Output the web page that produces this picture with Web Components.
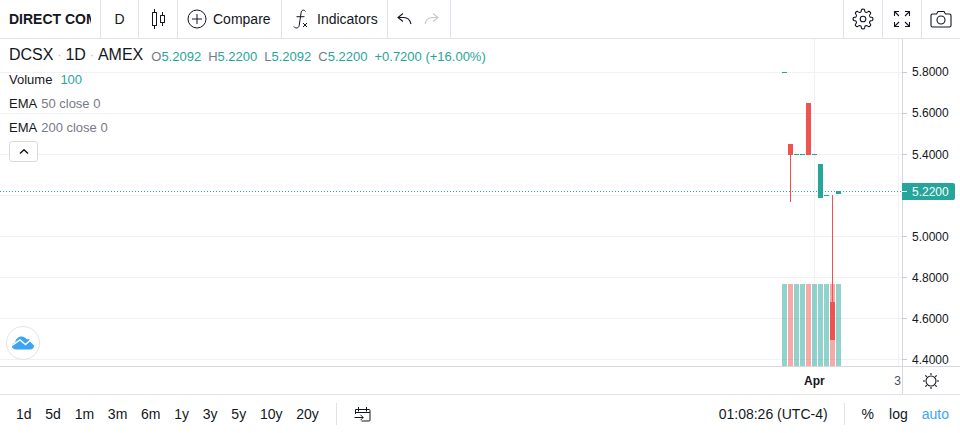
<!DOCTYPE html>
<html>
<head>
<meta charset="utf-8">
<title>DCSX chart</title>
<style>
	html, body { margin: 0; height: 100%; background: #fff; overflow: hidden; }
	body { font-family: "Liberation Sans", Arial, sans-serif; color: #131722; }
</style>
</head>
<body>
<tv-widget>
	<tv-toolbar slot="top">
		<tv-cell style="width:100px;padding-left:9px"><span style="display:block;width:82px;overflow:hidden;white-space:nowrap;font-weight:700">DIRECT COM</span></tv-cell>
		<tv-cell style="width:37px;justify-content:center">D</tv-cell>
		<tv-cell style="width:38px;justify-content:center">
			<svg width="28" height="28" viewBox="0 0 28 28" fill="#131722"><path d="M17 11v6h3v-6h-3zm-.5-1h4a.5.5 0 0 1 .5.5v7a.5.5 0 0 1-.5.5h-4a.5.5 0 0 1-.5-.5v-7a.5.5 0 0 1 .5-.5z"/><path d="M18 7h1v3.500h-1zm0 10.500h1V21h-1z"/><path d="M9 8v12h3V8H9zm-.5-1h4a.5.5 0 0 1 .5.5v13a.5.5 0 0 1-.5.5h-4a.5.5 0 0 1-.5-.5v-13a.5.5 0 0 1 .5-.5z"/><path d="M10 4h1v3.500h-1zm0 16.500h1V24h-1z"/></svg>
		</tv-cell>
		<tv-cell style="width:103px;padding-left:9px;gap:6px">
			<svg width="20" height="20" viewBox="0 0 20 20" fill="none" stroke="#131722"><circle cx="10" cy="10" r="9"/><path d="M10 5v10M5 10h10"/></svg>
			Compare
		</tv-cell>
		<tv-cell style="width:105px;padding-left:10px;gap:9px">
			<svg width="16" height="20" viewBox="0 0 16 20" fill="none" stroke="#131722"><path d="M13.500 2.500C12.500 .8 9.800 .5 9.200 3L7.200 16.500C6.800 19.300 3.400 19.800 1.800 17.500"/><path d="M4.500 7.700H12.500"/><path d="M11 14l4 4M15 14l-4 4"/></svg>
			Indicators
		</tv-cell>
		<tv-cell style="width:62px;padding-left:8px;gap:12px">
			<svg width="16" height="16" viewBox="0 0 16 16" fill="none" stroke="#131722" stroke-width="1.100"><path d="M7 2.500L2 6.500 7 10.500"/><path d="M2 6.500h6c3.500 0 6 2.500 7 6.500"/></svg>
			<svg width="16" height="16" viewBox="0 0 16 16" fill="none" stroke="#c5c8cf" stroke-width="1.100"><path d="M9 2.500L14 6.500 9 10.500"/><path d="M14 6.500H8c-3.500 0-6 2.500-7 6.500"/></svg>
		</tv-cell>
		<tv-spacer></tv-spacer>
		<tv-cell edge="left" style="width:39px;justify-content:center"><tv-gear></tv-gear></tv-cell>
		<tv-cell edge="left" style="width:39px;justify-content:center">
			<svg width="18" height="18" viewBox="0 0 18 18" fill="none" stroke="#131722" stroke-width="1.100"><path d="M6 1.500H1.500V6M1.500 1.500l4.500 4.500M12 1.500h4.500V6M16.500 1.500L12 6M6 16.500H1.500V12M1.500 16.500L6 12M12 16.500h4.500V12M16.500 16.500L12 12"/></svg>
		</tv-cell>
		<tv-cell edge="left" style="width:39px;justify-content:center">
			<svg width="22" height="18" viewBox="0 0 22 18" fill="none" stroke="#131722" stroke-width="1.100"><path d="M2.500 4H6.500L8 1.500h6L15.500 4h4a1.500 1.500 0 0 1 1.500 1.500v10a1.500 1.500 0 0 1-1.500 1.500h-17A1.500 1.500 0 0 1 1 15.500v-10A1.500 1.500 0 0 1 2.500 4z"/><circle cx="11" cy="10" r="4"/></svg>
		</tv-cell>
	</tv-toolbar>

	<tv-chart slot="chart">
		<tv-legend>
			<tv-title-row></tv-title-row>
			<tv-study name="Volume" value="100" tone="up"></tv-study>
			<tv-study name="EMA" value="50 close 0"></tv-study>
			<tv-study name="EMA" value="200 close 0"></tv-study>
			<tv-collapse></tv-collapse>
		</tv-legend>
	</tv-chart>

	<tv-timeaxis slot="time"></tv-timeaxis>

	<tv-rangebar slot="bottom"></tv-rangebar>
</tv-widget>

<script>
	const UP = "#26a69a";
	const DOWN = "#ef5350";
	//the chart's svg starts below the top bar, the candles are noted in page pixels
	const TOP = 39;

	function shadow(el, html) {
		el.attachShadow({ mode: "open" });
		el.shadowRoot.innerHTML = html;
	}

	class Widget extends HTMLElement {
		constructor() {
			super();
			shadow(this, `
				<style>
					:host { display: flex; flex-direction: column; width: 960px; height: 433px; }
				</style>
				<slot name="top"></slot>
				<slot name="chart"></slot>
				<slot name="time"></slot>
				<slot name="bottom"></slot>
			`);
		}
	}

	class Toolbar extends HTMLElement {
		constructor() {
			super();
			shadow(this, `
				<style>
					:host { display: flex; height: 38px; border-bottom: 1px solid #e0e3eb; font-size: 14px; flex: none; }
				</style>
				<slot></slot>
			`);
		}
	}

	//One section of the top bar, with its divider on the right unless edge="left".
	class Cell extends HTMLElement {
		constructor() {
			super();
			shadow(this, `
				<style>
					:host { display: flex; align-items: center; flex: none; height: 38px; box-sizing: content-box; border-right: 1px solid #e0e3eb; }
					:host([edge="left"]) { box-sizing: border-box; border-right: 0; border-left: 1px solid #e0e3eb; }
				</style>
				<slot></slot>
			`);
		}
		connectedCallback() {
			//the width given in the page includes the padding
			if (!this.hasAttribute("edge")) {
				const pad = parseInt(this.style.paddingLeft) || 0;
				this.style.width = parseInt(this.style.width) - pad + "px";
			}
		}
	}

	class Spacer extends HTMLElement {
		constructor() {
			super();
			shadow(this, `<style>:host { display: block; flex: 1; }</style>`);
		}
	}

	class Gear extends HTMLElement {
		constructor() {
			super();
			let d = "";
			for (let i = 0; i < 160; i++) {
				const a = (i / 160) * Math.PI * 2 + Math.PI / 8;
				const r = 8.6 + 1.3 * Math.tanh(2.4 * Math.cos(8 * a));
				d += (i ? "L" : "M") + (11 + r * Math.cos(a)).toFixed(2) + " " + (11 + r * Math.sin(a)).toFixed(2);
			}
			shadow(this, `
				<style>:host { display: block; width: 22px; height: 22px; }</style>
				<svg width="22" height="22" viewBox="0 0 22 22" fill="none" stroke="#131722" stroke-width="1.100" style="display:block">
					<path d="${d}Z"/><circle cx="11" cy="11" r="2.800"/>
				</svg>
			`);
		}
	}

	const CANDLES = [
		{ x: 782, o: 72, c: 72, up: true },
		{ x: 788, o: 155, c: 144, hi: 144, lo: 202, up: false },
		{ x: 794, o: 154, c: 154, up: true },
		{ x: 800, o: 154, c: 154, up: true },
		{ x: 806, o: 155, c: 103, up: false },
		{ x: 812, o: 154, c: 154, up: true },
		{ x: 818, o: 198, c: 164, up: true },
		{ x: 824, o: 195, c: 195, up: true },
		{ x: 830, o: 340, c: 302, hi: 195, lo: 302, up: false },
		{ x: 836, o: 194, c: 191, up: true }
	];

	class Chart extends HTMLElement {
		constructor() {
			super();
			const gridY = [72, 113, 154, 195, 236, 277, 318, 359].map(y => y - TOP);
			const grid = gridY.map(y => `<rect x="0" y="${y}" width="902" height="1"/>`).join("");
			const vols = CANDLES.map(k => `<rect x="${k.x}" y="245" width="5" height="82" fill="${k.up ? UP : DOWN}" fill-opacity=".5"/>`).join("");
			const bars = CANDLES.map(k => {
				const top = Math.min(k.o, k.c) - TOP;
				const h = Math.max(Math.abs(k.o - k.c), 1);
				const color = k.up ? UP : DOWN;
				const wick = k.lo ? `<rect x="${k.x + 2}" y="${k.hi - TOP}" width="1" height="${k.lo - k.hi}" fill="${color}"/>` : "";
				return `${wick}<rect x="${k.x}" y="${top}" width="5" height="${h}" fill="${color}"/>`;
			}).join("");
			const prices = ["5.8000", "5.6000", "5.4000", "", "5.0000", "4.8000", "4.6000", "4.4000"];
			const labels = prices.map((p, i) => `
				<rect x="0" y="${gridY[i]}" width="5" height="1" fill="#c9cbd1"/>
				${p ? `<text x="10" y="${gridY[i] + (i < 2 ? 4 : 5)}">${p}</text>` : ""}`).join("");
			shadow(this, `
				<style>
					:host { display: flex; height: 327px; flex: none; }
					.pane { position: relative; width: 902px; flex: none; }
					svg { display: block; }
					.axis { flex: 1; }
					.axis text { font: 12px "Liberation Sans", Arial, sans-serif; fill: #131722; }
					.axis .tag { fill: #fff; }
					.logo { position: absolute; left: 6px; top: 287px; width: 32px; height: 32px; border: 1px solid #e4e5e9; border-radius: 50%; background: #fff; display: flex; align-items: center; justify-content: center; }
				</style>
				<div class="pane">
					<svg width="902" height="327">
						<g fill="#f0f1f4">${grid}
							<rect x="814" y="0" width="1" height="327"/>
							<rect x="898" y="0" width="1" height="327"/>
						</g>
						<line x1="0" x2="902" y1="152.500" y2="152.500" stroke="${UP}" stroke-dasharray="1 2"/>
						${vols}${bars}
					</svg>
					<slot></slot>
					<div class="logo">
						<svg width="22" height="14" viewBox="0 0 22 14">
							<path d="M4 13.500C1.500 13.500 0 12 0 10C0 8 1.500 7 3 6.500C4 3 6 .5 9.500 .5C12 .5 14 2 15 3.500C16 3 18 3 19 5C21 5.500 22 7.500 22 9.500C22 12 20.500 13.500 18 13.500Z" fill="#3ba4f5"/>
							<path d="M0 9.500L8 4L13.500 8.500L18 4.500L22 8.500" fill="none" stroke="#fff" stroke-width="1.500"/>
						</svg>
					</div>
				</div>
				<div class="axis">
					<svg width="58" height="327">
						<rect x="0" y="0" width="1" height="327" fill="#d6d8de"/>
						${labels}
						<path d="M0 144h51a2 2 0 0 1 2 2v13a2 2 0 0 1-2 2H0z" fill="${UP}"/>
						<rect x="0" y="152" width="5" height="1" fill="#fff"/>
						<text class="tag" x="10" y="157">5.2200</text>
					</svg>
				</div>
			`);
		}
	}

	class Legend extends HTMLElement {
		constructor() {
			super();
			shadow(this, `
				<style>
					:host { position: absolute; left: 9px; top: 5px; display: flex; flex-direction: column; align-items: flex-start; font-size: 13px; }
				</style>
				<slot></slot>
			`);
		}
	}

	class TitleRow extends HTMLElement {
		constructor() {
			super();
			const ohlc = [["O", "5.2092"], ["H", "5.2200"], ["L", "5.2092"], ["C", "5.2200"]];
			const vals = ohlc.map(([k, v]) => `<span class="pair"><span class="key">${k}</span><span>${v}</span></span>`).join("");
			shadow(this, `
				<style>
					:host { display: flex; align-items: center; height: 22px; white-space: nowrap; margin-bottom: 1px; }
					.name { font-size: 16px; color: #131722; }
					.dot { color: #b2b5be; margin: 0 4px; font-size: 12px; }
					.vals { display: flex; color: ${UP}; font-size: 13px; margin-left: 8px; margin-top: 3px; }
					.pair { margin-right: 7px; }
					.key { color: #787b86; }
				</style>
				<span class="name">DCSX</span><span class="dot">·</span><span class="name">1D</span><span class="dot">·</span><span class="name">AMEX</span>
				<div class="vals">${vals}<span>+0.7200 (+16.00%)</span></div>
			`);
		}
	}

	class Study extends HTMLElement {
		constructor() {
			super();
			const up = this.getAttribute("tone") === "up";
			shadow(this, `
				<style>
					:host { display: flex; align-items: center; height: 24px; white-space: nowrap; font-size: 13px; }
					.value { margin-left: ${up ? 8 : 4}px; color: ${up ? UP : "#787b86"}; }
				</style>
				<span>${this.getAttribute("name")}</span><span class="value">${this.getAttribute("value")}</span>
			`);
		}
	}

	class Collapse extends HTMLElement {
		constructor() {
			super();
			shadow(this, `
				<style>
					:host { display: flex; align-items: center; justify-content: center; width: 27px; height: 19px; border: 1px solid #d8dae1; border-radius: 3px; background: #fff; margin-top: 2px; }
				</style>
				<svg width="10" height="7" viewBox="0 0 10 7" fill="none" stroke="#131722" stroke-width="1.500"><path d="M1 5.500L5 1.800L9 5.500"/></svg>
			`);
		}
	}

	class TimeAxis extends HTMLElement {
		constructor() {
			super();
			const rays = [0, 45, 90, 135, 180, 225, 270, 315].map(a => `<path d="M9 1v2" transform="rotate(${a} 9 9)"/>`).join("");
			shadow(this, `
				<style>
					:host { display: flex; height: 29px; flex: none; box-sizing: border-box; border-top: 1px solid #d6d8de; border-bottom: 1px solid #e0e3eb; font-size: 12px; }
					.scale { width: 902px; flex: none; display: flex; align-items: center; justify-content: flex-end; position: relative; }
					.scale b { position: absolute; left: 804px; }
					.scale span { margin-right: 1px; color: #4a4e59; }
					.corner { flex: 1; border-left: 1px solid #d6d8de; display: flex; align-items: center; justify-content: center; padding-right: 2px; }
				</style>
				<div class="scale"><b>Apr</b><span>3</span></div>
				<div class="corner">
					<svg width="18" height="18" viewBox="0 0 18 18" fill="none" stroke="#131722" stroke-width="1.100"><circle cx="9" cy="9" r="5"/>${rays}</svg>
				</div>
			`);
		}
	}

	class RangeBar extends HTMLElement {
		constructor() {
			super();
			const ranges = ["1d", "5d", "1m", "3m", "6m", "1y", "3y", "5y", "10y", "20y"];
			shadow(this, `
				<style>
					:host { display: flex; align-items: center; flex: 1; font-size: 14px; padding: 0 11px 0 16px; }
					.ranges { display: flex; gap: 13.750px; }
					.sep { width: 1px; height: 22px; background: #e0e3eb; }
					.grow { flex: 1; }
					.auto { color: #3ba4f5; }
					svg { display: block; }
				</style>
				<div class="ranges">${ranges.map(r => `<span>${r}</span>`).join("")}</div>
				<div class="sep" style="margin:0 17px 0 17px"></div>
				<svg width="17" height="16" viewBox="0 0 17 16" fill="none" stroke="#131722"><path d="M1.500 8V3.500H15a1 1 0 0 1 1 1V14a1 1 0 0 1-1 1H7.500"/><path d="M4.500 1V5.500M12.500 1V5.500M1.500 6.500H16"/><path d="M.5 11.500H9M6.500 8.800L9.200 11.500L6.500 14.200"/></svg>
				<div class="grow"></div>
				<span>01:08:26 (UTC-4)</span>
				<div class="sep" style="margin:0 17px 0 16px"></div>
				<span style="margin-right:15px">%</span>
				<span style="margin-right:14px">log</span>
				<span class="auto">auto</span>
			`);
		}
	}

	customElements.define("tv-widget", Widget);
	customElements.define("tv-toolbar", Toolbar);
	customElements.define("tv-cell", Cell);
	customElements.define("tv-spacer", Spacer);
	customElements.define("tv-gear", Gear);
	customElements.define("tv-chart", Chart);
	customElements.define("tv-legend", Legend);
	customElements.define("tv-title-row", TitleRow);
	customElements.define("tv-study", Study);
	customElements.define("tv-collapse", Collapse);
	customElements.define("tv-timeaxis", TimeAxis);
	customElements.define("tv-rangebar", RangeBar);
</script>
</body>
</html>
